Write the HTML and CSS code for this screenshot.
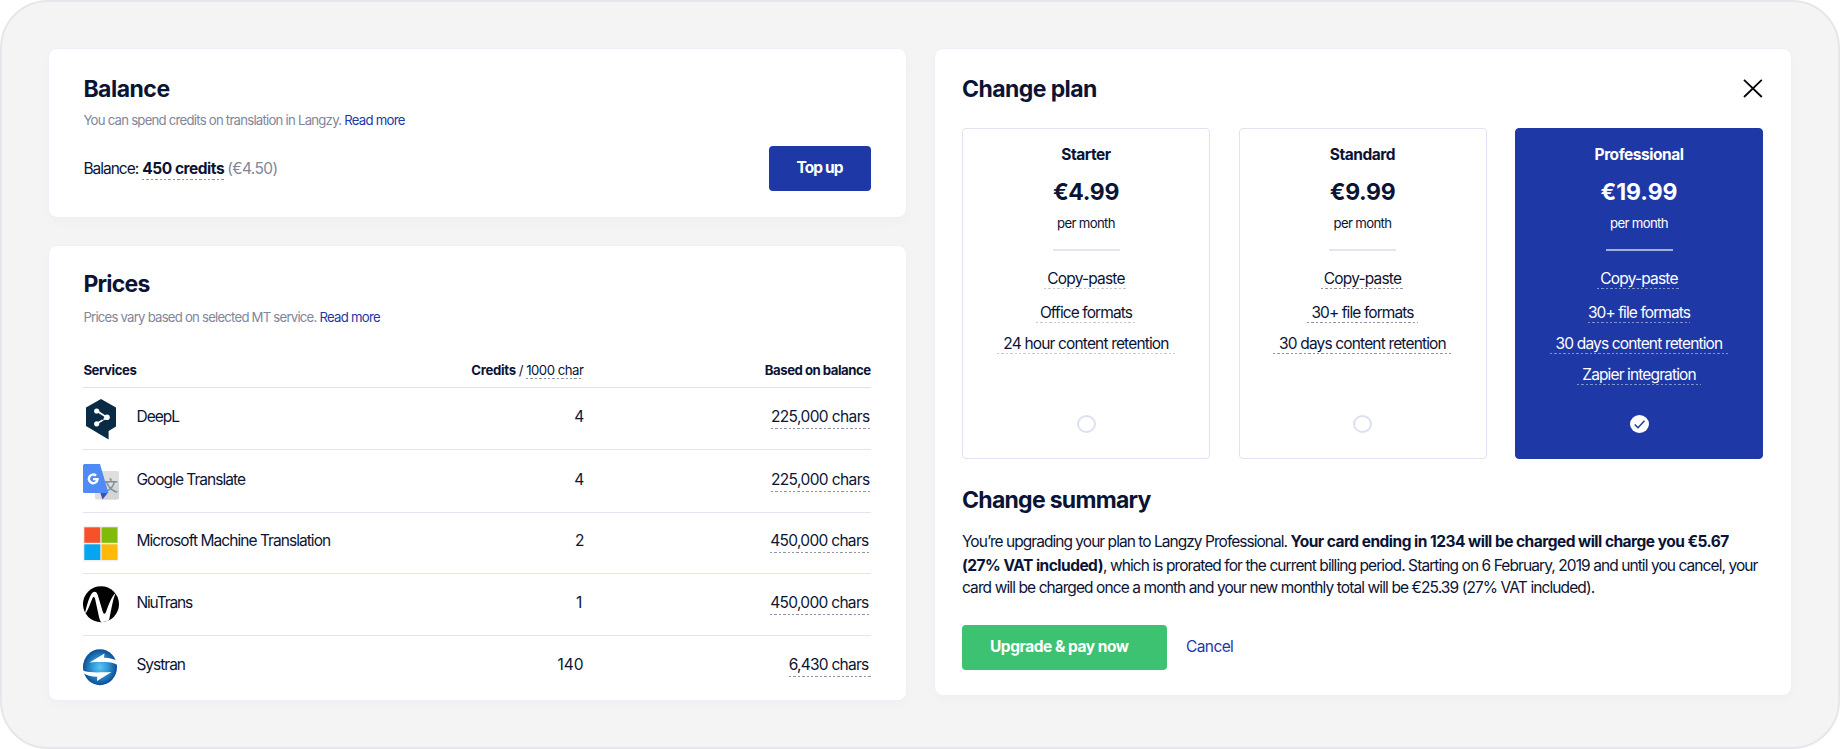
FILE: index.html
```html
<!DOCTYPE html>
<html lang="en">
<head>
<meta charset="utf-8">
<title>Langzy billing</title>
<link rel="stylesheet" href="styles.css">
</head>
<body>
<main class="frame">
  <div class="column">
    <section class="card balance">
      <h2>Balance</h2>
      <p class="sub"><span class="sub-text">You can spend credits on translation in Langzy.</span><a class="read">Read more</a></p>
      <div class="balance-row">
        <span class="label">Balance:</span>
        <span class="tip tip-balance">450 credits</span>
        <span class="euro">(€4.50)</span>
        <button class="btn btn-blue">Top up</button>
      </div>
    </section>

    <section class="card prices">
      <h2 class="prices-title">Prices</h2>
      <p class="sub"><span class="sub-text">Prices vary based on selected MT service.</span><a class="read">Read more</a></p>
      <div class="head">
        <b>Services</b>
        <span class="head-credits"><b class="cr">Credits</b><span>/</span><span class="tip tip-head">1000 char</span></span>
        <b class="head-based">Based on balance</b>
      </div>
      <div class="row row-deepl">
        <svg class="icon" width="36" height="41" viewBox="0 0 36 41">
          <path fill="#0a2b46" d="M18 0 33 8.5V27.500L25.600 32V40.500L3 27V8.500Z"/>
          <path d="m14 12 10 6.500-10 6" fill="none" stroke="#fff" stroke-width="1.800"/>
          <circle cx="13.700" cy="12" r="2.600" fill="#fff"/><circle cx="24" cy="18.300" r="2.800" fill="#fff"/><circle cx="13.700" cy="24.800" r="2.600" fill="#fff"/>
          <path d="m19 20 1.800 1.200" stroke="#0a2b46" stroke-width="1"/>
        </svg>
        <span class="name">DeepL</span><span class="num">4</span><span class="chars"><span class="tip c225">225,000 chars</span></span>
      </div>
      <div class="row row-google">
        <svg class="icon" width="36" height="36" viewBox="0 0 36 36">
          <rect x="12" y="7" width="24" height="28.500" rx="2" fill="#dfdfdf"/>
          <path d="M25 29 36 18v15.500a2 2 0 0 1-2 2H19Z" fill="#d5d5d5"/>
          <text x="20" y="27" class="wen">文</text>
          <path d="M17 28h8.500L19.500 35.500Z" fill="#3b50b8"/>
          <path d="M1.500 0H17l8.500 29h-24A1.500 1.500 0 0 1 0 27.500v-26A1.500 1.500 0 0 1 1.500 0Z" fill="#4f8bf5"/>
          <path d="M13 11.600a4.300 4.300 0 1 0 1.500 3.500H10" fill="none" stroke="#fff" stroke-width="2.400"/>
        </svg>
        <span class="name gt">Google Translate</span><span class="num">4</span><span class="chars"><span class="tip c225">225,000 chars</span></span>
      </div>
      <div class="row row-ms">
        <svg class="icon" width="36" height="36" viewBox="0 0 36 36">
          <path fill="#f1f1f1" d="M0 0h35.500v35.500H0z"/>
          <path fill="#f6512b" d="M1.300 1.300h16v15.500h-16z"/><path fill="#80bb0a" d="M18.500 1.300h16v15.500h-16z"/>
          <path fill="#05a5f0" d="M1.300 18.300h16V34h-16z"/><path fill="#ffb90a" d="M18.500 18.300h16V34h-16z"/>
        </svg>
        <span class="name">Microsoft Machine Translation</span><span class="num">2</span><span class="chars"><span class="tip c450">450,000 chars</span></span>
      </div>
      <div class="row row-niu">
        <svg class="icon" width="36" height="37" viewBox="0 0 36 37">
          <defs><clipPath id="disc"><circle cx="18" cy="18.200" r="18"/></clipPath></defs>
          <circle cx="18" cy="18.200" r="18"/>
          <path clip-path="url(#disc)" fill="#fff" d="M1.500 29C4 19 6.500 9 10 6.300c2-1.500 3.800-.3 4.600 2.300l5.200 17.200c.8 2.600 2.300 2.400 3.200.1C25.800 18.500 29 9 33 7c-2.800 4-4.500 16-6.500 25-.6 2.800-1.500 5-2.500 5h-5c-1.500-1-2.300-3-3-6l-4-18.500c-.5-2-1.700-2.200-2.500-.3C7.300 17 5.500 23 3.200 26.500Z"/>
        </svg>
        <span class="name niu">NiuTrans</span><span class="num one">1</span><span class="chars"><span class="tip c450">450,000 chars</span></span>
      </div>
      <div class="row row-sys">
        <svg class="icon" width="36" height="37" viewBox="0 0 36 37">
          <defs><radialGradient id="glow"><stop offset="0" stop-color="#5cc4f3"/><stop offset=".5" stop-color="#2e93d3"/><stop offset="1" stop-color="#0d4c94"/></radialGradient></defs>
          <ellipse cx="17" cy="18.200" rx="17" ry="18" fill="url(#glow)"/>
          <path fill="#fff" d="M6.500 13.500 21.500 4.600 21 8.800C26.500 9 31 9.800 35 12.500L34.500 16C29.500 12.800 19 12.800 6.500 13.500Z"/>
          <path fill="#fff" d="M0 21.500C6 24 16 23.500 28.500 23L14 32 14.300 27.800C8 27.500 3.500 26.500 0 24Z"/>
        </svg>
        <span class="name sys">Systran</span><span class="num n140">140</span><span class="chars"><span class="tip c643">6,430 chars</span></span>
      </div>
    </section>
  </div>

  <section class="card change">
    <header class="change-head">
      <h2>Change plan</h2>
      <svg class="close" width="20" height="19" viewBox="0 0 20 19"><path d="M1 .8 18.800 18M18.800.8 1 18" fill="none" stroke="#05060c" stroke-width="1.800"/></svg>
    </header>
    <div class="plans">
      <article class="plan starter">
        <b class="plan-name">Starter</b>
        <strong class="price">€4.99</strong>
        <span class="per">per month</span>
        <i class="divider"></i>
        <span class="tip f1">Copy-paste</span>
        <span class="tip f2 office">Office formats</span>
        <span class="tip f3">24 hour content retention</span>
        <span class="radio"></span>
      </article>
      <article class="plan">
        <b class="plan-name">Standard</b>
        <strong class="price">€9.99</strong>
        <span class="per">per month</span>
        <i class="divider"></i>
        <span class="tip f1">Copy-paste</span>
        <span class="tip f2">30+ file formats</span>
        <span class="tip f3">30 days content retention</span>
        <span class="radio"></span>
      </article>
      <article class="plan pro">
        <b class="plan-name">Professional</b>
        <strong class="price wide">€19.99</strong>
        <span class="per">per month</span>
        <i class="divider"></i>
        <span class="tip f1">Copy-paste</span>
        <span class="tip f2 snug">30+ file formats</span>
        <span class="tip f3">30 days content retention</span>
        <span class="tip f4">Zapier integration</span>
        <svg class="check" width="19" height="18" viewBox="0 0 19 18"><ellipse cx="9.500" cy="9" rx="9.500" ry="9" fill="#fff"/><path d="m4.700 9.500 3.300 3.200 6.500-7" fill="none" stroke="#1e38a5" stroke-width="1.500"/></svg>
      </article>
    </div>
    <h2 class="summary-title">Change summary</h2>
    <div class="summary">
      <p class="l1"><span class="l1a">You’re upgrading your plan to Langzy Professional.</span> <b>Your card ending in 1234 will be charged will charge you €5.67</b></p>
      <p class="l2"><b>(27% VAT included)</b>, which is prorated for the current billing period. Starting on 6 February, 2019 and until you cancel, your</p>
      <p class="l3">card will be charged once a month and your new monthly total will be €25.39 (27% VAT included).</p>
    </div>
    <div class="actions"><button class="btn btn-green">Upgrade &amp; pay now</button><a class="cancel">Cancel</a></div>
  </section>
</main>
</body>
</html>
```
FILE: styles.css
```css
* { box-sizing: border-box; }
body {
  margin: 0;
  background: #fff;
  color: #0b1434;
  font: 400 15.5px/20px Inter, sans-serif;
  letter-spacing: -0.95px;
  white-space: nowrap;
}
h2, p { margin: 0; }
b { font-weight: 700; }
.frame {
  width: 1840px;
  height: 749px;
  border: 2px solid #e6e6ec;
  border-radius: 48px;
  background: #f4f4f4;
  padding: 47px;
  display: flex;
  gap: 29.5px;
  align-items: flex-start;
}
.column { width: 856.5px; display: flex; flex-direction: column; gap: 29px; }
.card {
  background: #fff;
  border-radius: 8px;
  box-shadow: 0 0 0 1px rgba(235, 237, 252, .6), 0 5px 14px rgba(30, 40, 120, .025);
}
h2 { font-size: 23px; line-height: 28px; font-weight: 700; letter-spacing: -0.58px; }
.balance { height: 168px; padding: 26px 35px 0 34.4px; }
.balance h2 { letter-spacing: -0.5px; }
.sub { margin-top: 8px; font-size: 13.2px; line-height: 18px; letter-spacing: -0.77px; display: flex; gap: 3px; }
.sub-text { color: #81869a; }
.read { color: #1e38a5; letter-spacing: -0.76px; }
.balance-row { margin-top: 17px; height: 45px; display: flex; align-items: center; }
.label { margin-right: 4px; letter-spacing: -1px; }
.tip {
  display: inline-block;
  --dash: #8f93a8;
  background: repeating-linear-gradient(90deg, var(--dash) 0 2.4px, transparent 2.4px 4.4px) 0 100% / 100% 1px no-repeat;
}
.tip-balance { font-weight: 700; letter-spacing: -0.46px; height: 21px; margin: 1px 3px 0 0; }
.euro { color: #81869a; letter-spacing: -0.6px; }
.btn {
  border: 0;
  border-radius: 4px;
  color: #fff;
  font: 700 15.5px/20px Inter, sans-serif;
}
.btn-blue { margin-left: auto; width: 102px; height: 45px; background: #1e38a5; letter-spacing: -0.9px; padding: 0 0 1px; }

.prices { height: 454px; padding: 24px 35px 0 34.4px; }
.prices-title { letter-spacing: -0.75px; }
.prices .sub { margin-top: 10px; letter-spacing: -0.79px; }
.head {
  height: 62px;
  border-bottom: 1px solid #e0e1ee;
  display: grid;
  grid-template-columns: 300px 200px 1fr;
  align-items: end;
  padding-bottom: 8px;
  font-size: 13.2px;
  line-height: 18px;
  letter-spacing: -0.45px;
}
.head-credits { display: flex; gap: 3px; justify-content: flex-end; align-items: flex-start; height: 18px; }
.cr { letter-spacing: -0.3px; }
.tip-head { letter-spacing: -0.5px; height: 18px; }
.head-based { text-align: right; letter-spacing: -0.5px; }
.row {
  display: grid;
  grid-template-columns: 36px 318px 147px 1fr;
  height: 62px;
  border-bottom: 1px solid #e3e4f0;
  align-items: start;
  padding-top: 19px;
}
.icon { display: block; }
.name { padding-left: 17px; }
.num, .chars { text-align: right; }
.row-google { height: 63px; padding-top: 20px; }
.row-ms { height: 61px; padding-top: 18px; }
.row-sys { border: 0; }
.row-deepl .icon { margin-top: -8px; }
.row-google .icon { margin-top: -6px; }
.row-ms .icon { margin-top: -5px; }
.row-niu .icon { margin-top: -7px; }
.row-sys .icon { margin-top: -6px; }
.wen { font: 500 15px "Noto Sans CJK SC", sans-serif; fill: #7b919b; letter-spacing: 0; }
.gt { letter-spacing: -0.98px; }
.niu { letter-spacing: -1.15px; }
.sys { letter-spacing: -1px; }
.num { padding-right: 1px; }
.one { padding-right: 3px; }
.n140 { letter-spacing: -0.1px; }
.chars .tip { height: 22px; padding-right: 1px; }
.c225 { letter-spacing: -0.6px; }
.chars .c450 { letter-spacing: -0.7px; padding-right: 2px; }
.chars .c643 { letter-spacing: -0.75px; padding-right: 2px; }

.change { width: 856px; height: 646px; padding: 26px 28px 0 27px; }
.change-head { display: flex; justify-content: space-between; align-items: center; }
.close { margin: -2px 0 0; }
.plans { margin-top: 25px; display: grid; grid-template-columns: repeat(3, 1fr); gap: 28.5px; }
.plan {
  height: 331px;
  border: 1px solid #e0e2ef;
  border-radius: 4px;
  padding: 16px 0 25px;
  display: flex;
  flex-direction: column;
  align-items: center;
}
.plan-name { letter-spacing: -0.47px; }
.price { margin-top: 13px; font-size: 23px; line-height: 28px; font-weight: 700; letter-spacing: -0.35px; }
.wide { letter-spacing: -0.05px; }
.per { margin-top: 8px; font-size: 13.2px; line-height: 18px; letter-spacing: -0.67px; }
.divider { margin: 17px 0 18px; width: 67px; height: 1.5px; background: #e3e5f0; }
.plan .tip { height: 20px; padding: 0 3px; }
.plan .f2 { margin-top: 14px; padding: 0 4px; letter-spacing: -0.9px; }
.plan .snug { padding: 0; }
.plan .f3 { margin-top: 11px; padding: 0 6px; letter-spacing: -0.84px; }
.plan .f4 { margin-top: 11px; padding: 0 5px; letter-spacing: -0.87px; }
.plan .f1 { letter-spacing: -0.82px; padding: 0 3px; }
.starter .tip { --dash: #c6c8d4; }
.radio { margin-top: auto; width: 19px; height: 18px; border: 2px solid #dde0f0; border-radius: 50%; }
.pro { background: #1e38a5; border-color: #1e38a5; color: #fff; }
.pro .tip { --dash: #8492ce; }
.pro .divider { background: #a5afda; }
.check { margin-top: auto; }
.summary-title { margin-top: 27px; letter-spacing: -0.72px; }
.summary { margin-top: 16px; }
.summary b { letter-spacing: -0.52px; }
.l1, .l2 { line-height: 24px; }
.l1a { letter-spacing: -0.96px; }
.l2 { letter-spacing: -0.92px; }
.l3 { line-height: 20px; letter-spacing: -0.9px; }
.actions { margin-top: 27px; display: flex; align-items: center; gap: 19px; }
.btn-green { width: 205px; height: 45px; background: #3dc271; text-align: left; padding: 0 0 2px 28px; letter-spacing: -0.47px; }
.cancel { color: #1e38a5; letter-spacing: -0.6px; padding-bottom: 2px; }
```
